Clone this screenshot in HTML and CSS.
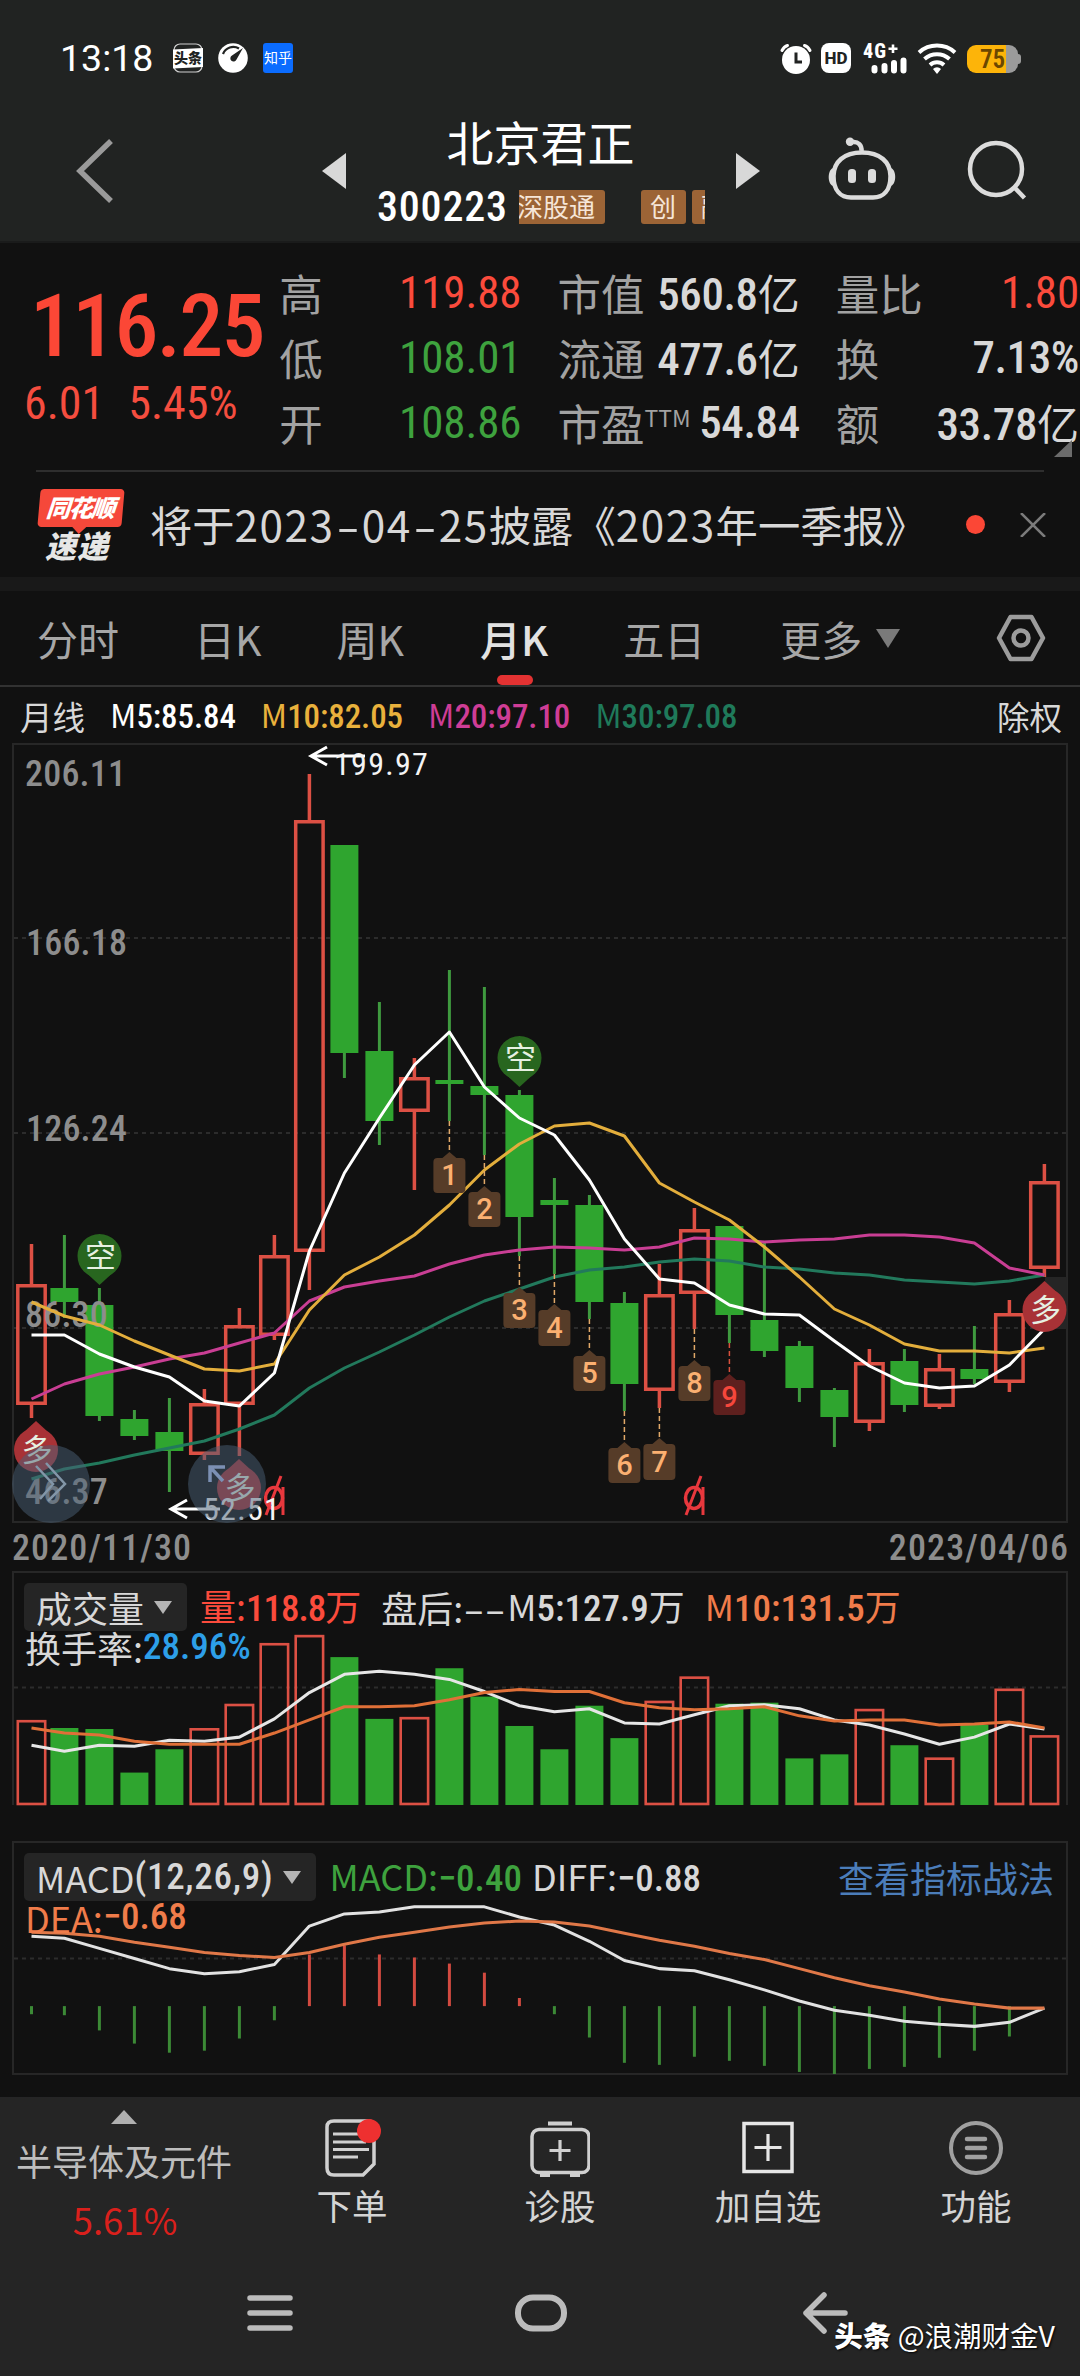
FILE: index.html
```html
<!DOCTYPE html>
<html lang="zh-CN">
<head>
    <meta charset="UTF-8">
    <meta name="viewport" content="width=device-width, initial-scale=1.0">
    <title>北京君正 300223</title>
    <link rel="stylesheet" href="styles.css">
</head>
<body>
    <header class="top">
        <div class="status-bar">
            <span class="clock">13:18</span>
            <div class="status-apps">
                <svg width="30" height="30" viewBox="0 0 30 30">
                    <rect x="1" y="1" width="28" height="28" rx="6" fill="none" stroke="#cfcfcf" stroke-width="1.2"/>
                    <path d="M0 6.500 L30 5 V24 L0 25.500Z" fill="#fff"/>
                    <text x="15" y="20" class="toutiao-text">头条</text>
                </svg>
                <svg width="30" height="30" viewBox="0 0 30 30">
                    <circle cx="15" cy="15" r="14.800" fill="#fff"/>
                    <path d="M5 11 A11 11 0 0 1 21 5.500" fill="none" stroke="#212322" stroke-width="2.200"/>
                    <path d="M25 5 L18.500 16.500 A3.200 3.200 0 1 1 14 12.500Z" fill="#212322"/>
                </svg>
                <span class="zhihu">知乎</span>
            </div>
            <div class="status-right">
                <svg width="34" height="31" viewBox="0 0 34 31">
                    <circle cx="17" cy="17" r="14" fill="#fff"/>
                    <path d="M3 7.500 Q5 3.500 8.500 2.500 M31 7.500 Q29 3.500 25.500 2.500" stroke="#fff" stroke-width="3" fill="none" stroke-linecap="round"/>
                    <path d="M17 9.500 V19 H23" fill="none" stroke="#212322" stroke-width="3"/>
                </svg>
                <span class="hd">HD</span>
                <svg class="net" width="46" height="31" viewBox="0 0 46 31">
                    <text x="0" y="15" class="net-text">4G</text>
                    <path d="M30 1.500 V10 M25.500 5.700 H34.500" stroke="#fff" stroke-width="2.600"/>
                    <path d="M11.500 25 V27.500 M21.500 23 V27.500 M31 20 V27.500 M40.500 17.500 V27.500" stroke="#fff" stroke-width="6" stroke-linecap="round"/>
                </svg>
                <svg class="wifi" width="40" height="31" viewBox="0 0 40 31">
                    <path d="M2 9.500 A27 27 0 0 1 38 9.500 M7.500 16 A18.500 18.500 0 0 1 32.500 16 M13 22 A10.500 10.500 0 0 1 27 22" fill="none" stroke="#fff" stroke-width="4"/>
                    <path d="M16 26 A5.500 5.500 0 0 1 24 26 L20 31Z" fill="#fff"/>
                </svg>
                <div class="battery"><span>75</span></div>
            </div>
        </div>
        <div class="title-bar">
            <svg class="back" width="38" height="64" viewBox="0 0 38 64">
                <path d="M35 2 L4 32 L35 62" fill="none" stroke="#9a9a9a" stroke-width="5.500"/>
            </svg>
            <svg class="prev" width="24" height="36" viewBox="0 0 24 36"><path d="M24 0 V36 L0 18Z" fill="#d8d8d8"/></svg>
            <div class="stock">
                <h1>北京君正</h1>
                <div class="code-row">
                    <span class="code num">300223</span>
                    <div class="tags">
                        <span class="tag tag-cut">深股通</span>
                        <span class="tag">创</span>
                        <span class="tag">融</span>
                    </div>
                </div>
            </div>
            <svg class="next" width="24" height="36" viewBox="0 0 24 36"><path d="M0 0 V36 L24 18Z" fill="#d8d8d8"/></svg>
            <svg class="robot" width="70" height="64" viewBox="0 0 70 64">
                <path d="M35 15.500 C53 15.500 63.500 25 63.500 39 C63.500 54 56 60.500 46 60.500 H24 C14 60.500 6.500 54 6.500 39 C6.500 25 17 15.500 35 15.500Z" fill="none" stroke="#dcdcdc" stroke-width="4.500"/>
                <path d="M34.500 14 C35 8 31 4.500 26 5" fill="none" stroke="#dcdcdc" stroke-width="4.500"/>
                <path d="M7 31 C0 31 0 49 7 49Z M63 31 C70 31 70 49 63 49Z" fill="#dcdcdc"/>
                <circle cx="23" cy="4.800" r="4.200" fill="#dcdcdc"/>
                <rect x="21" y="32" width="8" height="14" rx="3.500" fill="#dcdcdc"/>
                <rect x="41" y="32" width="8" height="14" rx="3.500" fill="#dcdcdc"/>
            </svg>
            <svg class="search" width="62" height="62" viewBox="0 0 62 62">
                <circle cx="29" cy="29" r="26" fill="none" stroke="#dcdcdc" stroke-width="4.500"/>
                <path d="M47.500 47.500 L57.500 58" stroke="#dcdcdc" stroke-width="4.500"/>
            </svg>
        </div>
    </header>

    <section class="quote">
        <div class="price-box">
            <div class="price num">116.25</div>
            <div class="change num"><span>6.01</span><span>5.45%</span></div>
        </div>
        <dl class="stats col-a">
            <div><dt>高</dt><dd class="num up">119.88</dd></div>
            <div><dt>低</dt><dd class="num down">108.01</dd></div>
            <div><dt>开</dt><dd class="num down">108.86</dd></div>
        </dl>
        <dl class="stats col-b">
            <div><dt>市值</dt><dd><span class="num">560.8</span>亿</dd></div>
            <div><dt>流通</dt><dd><span class="num">477.6</span>亿</dd></div>
            <div><dt>市盈<sup>TTM</sup></dt><dd class="num">54.84</dd></div>
        </dl>
        <dl class="stats col-c">
            <div><dt>量比</dt><dd class="num up">1.80</dd></div>
            <div><dt>换</dt><dd class="num">7.13%</dd></div>
            <div><dt>额</dt><dd><span class="num">33.78</span>亿</dd></div>
        </dl>
        <svg class="corner" width="18" height="17" viewBox="0 0 18 17"><path d="M18 0 V17 H0Z" fill="#6c6c6c"/></svg>
    </section>

    <section class="news">
        <div class="news-logo">
            <span class="logo-top">同花顺</span>
            <span class="logo-bottom">速递</span>
        </div>
        <p>将于<span class="date">2023<i>-</i>04<i>-</i>25</span>披露《<span class="date">2023</span>年一季报》</p>
        <span class="dot"></span>
        <svg width="26" height="24" viewBox="0 0 26 24"><path d="M1 0 L25 24 M25 0 L1 24" stroke="#7b7b7b" stroke-width="2.500"/></svg>
    </section>

    <nav class="tabs">
        <a>分时</a>
        <a>日K</a>
        <a>周K</a>
        <a class="active">月K</a>
        <a>五日</a>
        <a class="more">更多<svg width="24" height="19" viewBox="0 0 24 19"><path d="M0 0 H24 L12 19Z" fill="#7a7a7a"/></svg></a>
        <svg class="gear" width="50" height="50" viewBox="0 0 50 50">
            <path d="M14.500 4 H35.500 L47 25 L35.500 46 H14.500 L3 25Z" fill="none" stroke="#9c9c9c" stroke-width="4.500" stroke-linejoin="round"/>
            <circle cx="25" cy="25" r="7.500" fill="none" stroke="#9c9c9c" stroke-width="4.500"/>
        </svg>
    </nav>

    <div class="ma-row">
        <span class="period">月线</span>
        <span class="ma5">M<b>5:85.84</b></span>
        <span class="ma10">M<b>10:82.05</b></span>
        <span class="ma20">M<b>20:97.10</b></span>
        <span class="ma30">M<b>30:97.08</b></span>
        <span class="adjust">除权</span>
    </div>

    <svg id="kline" class="chart" width="1080" height="782" viewBox="0 742 1080 782"></svg>

    <div class="dates num"><span>2020/11/30</span><span>2023/04/06</span></div>

    <section class="panel volume">
        <svg id="volume" class="chart" width="1080" height="235" viewBox="0 1571 1080 232" preserveAspectRatio="none"></svg>
        <div class="panel-head">
            <div class="head-row">
                <span class="picker">成交量<i></i></span>
                <span class="up vol-now">量:<b>118.8</b>万</span>
                <span>盘后:<em>--</em></span>
                <span class="vol-m5">M<b>5:127.9</b>万</span>
                <span class="orange">M<b>10:131.5</b>万</span>
            </div>
            <div class="head-row second">换手率:<b class="blue">28.96%</b></div>
        </div>
    </section>

    <section class="panel macd">
        <svg id="macd" class="chart" width="1080" height="235" viewBox="0 1837 1080 232" preserveAspectRatio="none"></svg>
        <div class="panel-head">
            <div class="head-row">
                <span class="picker wide">MACD<b>(12,26,9)</b><i></i></span>
                <span class="down macd-value">MACD:<b>−0.40</b></span>
                <span>DIFF:<b>−0.88</b></span>
                <a class="guide">查看指标战法</a>
            </div>
            <div class="head-row second orange">DEA:<b>−0.68</b></div>
        </div>
    </section>

    <footer class="bottom">
        <div class="actions">
            <div class="sector">
                <svg width="26" height="14" viewBox="0 0 26 14"><path d="M13 0 L26 14 H0Z" fill="#b0b0b0"/></svg>
                <span class="sector-name">半导体及元件</span>
                <span class="sector-change">5.61%</span>
            </div>
            <div class="action">
                <svg width="60" height="60" viewBox="0 0 60 60">
                    <path d="M12 3 H46 Q52 3 52 9 V46 L41 57 H12 Q5 57 5 50 V9 Q5 3 12 3Z" fill="none" stroke="#d0d0d0" stroke-width="3.500"/>
                    <path d="M11 16 H40 M11 24 H44 M11 31.500 H47 M11 39 H36" stroke="#d0d0d0" stroke-width="3.200"/>
                    <circle cx="47" cy="13" r="12" fill="#ee3030"/>
                </svg>
                <span>下单</span>
            </div>
            <div class="action">
                <svg width="60" height="60" viewBox="0 0 60 60">
                    <path d="M18 5.500 H42" stroke="#d0d0d0" stroke-width="4"/>
                    <rect x="2" y="11.500" width="57" height="43" rx="7" fill="none" stroke="#d0d0d0" stroke-width="3.500"/>
                    <path d="M10 57 H20 M40 57 H50" stroke="#d0d0d0" stroke-width="4"/>
                    <path d="M30 22 V43 M19.500 32.500 H40.500" stroke="#d0d0d0" stroke-width="3.200"/>
                </svg>
                <span>诊股</span>
            </div>
            <div class="action">
                <svg width="60" height="60" viewBox="0 0 60 60">
                    <rect x="6" y="5.500" width="48" height="48" fill="none" stroke="#e6e6e6" stroke-width="3.500"/>
                    <path d="M30 16 V43 M16.500 29.500 H43.500" stroke="#e6e6e6" stroke-width="3.200"/>
                </svg>
                <span>加自选</span>
            </div>
            <div class="action">
                <svg width="60" height="60" viewBox="0 0 60 60">
                    <circle cx="30" cy="30" r="25" fill="none" stroke="#a0a0a0" stroke-width="4"/>
                    <path d="M21 21 H39 M21 30 H39 M21 39 H39" stroke="#a0a0a0" stroke-width="4.500" stroke-linecap="round"/>
                </svg>
                <span>功能</span>
            </div>
        </div>
        <div class="system-nav">
            <svg width="46" height="38" viewBox="0 0 46 38"><path d="M3 4 H43 M3 19 H43 M3 34 H43" stroke="#bcbcbc" stroke-width="5.500" stroke-linecap="round"/></svg>
            <svg width="54" height="38" viewBox="0 0 54 38"><rect x="4" y="3.500" width="46" height="31" rx="15" fill="none" stroke="#bcbcbc" stroke-width="6"/></svg>
            <svg width="46" height="42" viewBox="0 0 46 42"><path d="M22 3 L4 21 L22 39 M4 21 H43" fill="none" stroke="#bcbcbc" stroke-width="5.500" stroke-linecap="round" stroke-linejoin="round"/></svg>
        </div>
        <div class="watermark"><b>头条</b> @浪潮财金V</div>
    </footer>

    <script src="script.js"></script>
</body>
</html>
```
FILE: styles.css
```css
* {
    margin: 0;
    padding: 0;
    box-sizing: border-box;
}

body {
    width: 1080px;
    height: 2376px;
    overflow: hidden;
    background-color: #111111;
    color: #d8d8d8;
    font-family: "Noto Sans CJK SC", sans-serif;
    font-weight: 400;
}

svg {
    display: block;
    flex: none;
}

b,
.num {
    font-family: "Roboto Condensed", Roboto, sans-serif;
    font-weight: 500;
}

i,
em {
    font-style: normal;
}

.up {
    color: #fb4b3c;
}

.down {
    color: #3ea23e;
}

.orange {
    color: #f07c4a;
}

.blue {
    color: #2d9fe8;
}

/* status bar + title */
.top {
    height: 243px;
    background-color: #212322;
    border-bottom: 2px solid #1a1b1b;
}

.status-bar {
    display: flex;
    align-items: center;
    height: 116px;
    padding: 0 60px;
    color: #ffffff;
}

.clock {
    width: 113px;
    font-family: Roboto, sans-serif;
    font-size: 37.5px;
}

.status-apps {
    display: flex;
    gap: 15px;
}

.toutiao-text {
    font-size: 14px;
    font-weight: 900;
    text-anchor: middle;
    fill: #212322;
}

.zhihu {
    width: 30px;
    height: 30px;
    border-radius: 3px;
    background-color: #0b6cff;
    font-size: 14px;
    line-height: 28px;
    text-align: center;
}

.status-right {
    display: flex;
    align-items: center;
    margin-left: auto;
}

.hd {
    width: 30px;
    height: 30px;
    margin: 0 12px 0 8px;
    border-radius: 8px;
    background-color: #ffffff;
    color: #212322;
    font: 800 17px/31px Roboto, sans-serif;
    text-align: center;
}

.net-text {
    font: 800 20px "Roboto Condensed", Roboto, sans-serif;
    letter-spacing: 1px;
    fill: #ffffff;
}

.wifi {
    margin: 0 10px 0 8px;
}

.battery {
    position: relative;
    width: 51px;
    height: 28px;
    margin: 2px 2px 0 0;
    border-radius: 9px;
    background: linear-gradient(to right, #fdb409 39px, #9b9b9b 39px);
    color: #6b4700;
    font: 600 25px/29px "Roboto Condensed", Roboto, sans-serif;
    text-align: center;
}

.battery::after {
    content: "";
    position: absolute;
    right: -3px;
    top: 9px;
    width: 4px;
    height: 10px;
    border-radius: 0 3px 3px 0;
    background-color: #9b9b9b;
}

.title-bar {
    display: flex;
    height: 125px;
    padding-left: 76px;
}

.back {
    margin-top: 23px;
}

.prev {
    margin: 37px 0 0 208px;
}

.next {
    margin: 37px 0 0 29px;
}

.robot {
    margin: 21px 0 0 67px;
}

.search {
    margin: 24px 0 0 70px;
}

.stock {
    width: 330px;
    margin-left: 31px;
}

.stock h1 {
    margin: -4px 0 0 -3px;
    font-size: 47px;
    font-weight: 400;
    line-height: 58px;
    text-align: center;
    color: #ffffff;
}

.code-row {
    display: flex;
    align-items: center;
    height: 64px;
    margin-top: 5px;
}

.code {
    width: 142px;
    font-size: 42px;
    letter-spacing: 0.8px;
    line-height: 64px;
    color: #ffffff;
}

.tags {
    display: flex;
    width: 186px;
    overflow: hidden;
}

.tag {
    flex: none;
    height: 34px;
    margin-right: 6px;
    padding: 0 9.5px;
    border-radius: 3px;
    background-color: #9c6436;
    color: #f6e6d8;
    font-size: 26px;
    line-height: 32px;
}

.tag-cut {
    margin: 0 36px 0 -2px;
    padding-left: 0;
}

/* quote */
.quote {
    position: relative;
    display: flex;
    height: 227px;
    margin-right: 1px;
    padding-top: 17px;
}

.price-box {
    width: 280px;
}

.price {
    margin: 16px 0 0 30px;
    color: #fb4736;
    font-size: 88px;
    letter-spacing: -1.8px;
    line-height: 100px;
}

.change {
    display: flex;
    gap: 24px;
    margin: 2px 0 0 24px;
    color: #f54d3f;
    font-size: 46px;
    font-weight: 400;
    line-height: 50px;
}

.stats > div {
    display: flex;
    align-items: center;
    justify-content: space-between;
    height: 65px;
    line-height: 59px;
    white-space: nowrap;
}

.stats dt {
    color: #a2a2a2;
    font-size: 43.5px;
}

.stats dd {
    font-size: 42px;
}

.stats .num {
    font-size: 45px;
    letter-spacing: -0.4px;
}

.stats dd.up,
.stats dd.down {
    font-weight: 450;
    letter-spacing: -0.1px;
}

.stats sup {
    font-size: 23px;
    line-height: 1;
    vertical-align: 14px;
}

.col-a {
    width: 243px;
}

.col-b {
    width: 243px;
    margin-left: 36px;
}

.col-c {
    width: 244px;
    margin-left: 36px;
}

.corner {
    position: absolute;
    right: 7px;
    top: 197px;
}

/* news */
.news {
    display: flex;
    align-items: center;
    height: 107px;
    margin: 0 36px;
    border-top: 2px solid #2e2e2e;
}

.news-logo {
    flex: none;
    width: 90px;
    height: 76px;
    margin: 4px 24px 0 0;
    font-weight: 900;
    font-style: italic;
}

.logo-top {
    display: block;
    position: relative;
    width: 84px;
    height: 38px;
    margin-left: 3px;
    padding-right: 2px;
    border-radius: 4px;
    background-color: #f5483a;
    color: #ffffff;
    font-size: 24px;
    letter-spacing: -1.5px;
    line-height: 36px;
    text-align: center;
    transform: skewX(-5deg);
}

.logo-top::after {
    content: "";
    position: absolute;
    left: 35px;
    top: 38px;
    border: 7px solid transparent;
    border-top-color: #f5483a;
}

.logo-bottom {
    display: block;
    margin: -3px 0 0 9px;
    font-size: 31px;
    letter-spacing: 1px;
    line-height: 41px;
    color: #e6e6e6;
}

.news p {
    flex: none;
    width: 816px;
    margin-top: -2px;
    font-size: 42.3px;
    line-height: 80px;
    white-space: nowrap;
}

.news .date {
    letter-spacing: 1.5px;
}

.news .date i {
    display: inline-block;
    margin: 0 5px 0 6px;
    transform: scaleX(1.6);
}

.dot {
    flex: none;
    width: 19px;
    height: 19px;
    margin-right: 35px;
    border-radius: 50%;
    background-color: #fb4736;
}

/* tabs */
.tabs {
    display: flex;
    align-items: center;
    height: 110px;
    padding-left: 37px;
    border-top: 14px solid #191919;
    border-bottom: 2px solid #323232;
    color: #a6a6a6;
    font-size: 41px;
    line-height: 70px;
}

.tabs a {
    position: relative;
    margin-right: 75px;
}

.tabs .active {
    margin-left: 1px;
    color: #e2e2e2;
    font-weight: 500;
}

.tabs .active::after {
    content: "";
    position: absolute;
    left: 17px;
    bottom: -12px;
    width: 36px;
    height: 10px;
    border-radius: 5px;
    background-color: #e33232;
}

.tabs .more {
    display: flex;
    align-items: center;
    gap: 14px;
    margin-right: 0;
}

.gear {
    margin: 0 34px 0 auto;
}

/* moving averages */
.ma-row {
    display: flex;
    align-items: center;
    height: 55px;
    padding: 1px 18px 0 20px;
    font-size: 32.5px;
    line-height: 55px;
    white-space: nowrap;
}

.ma-row span {
    margin-right: 25px;
}

.ma-row b {
    font-size: 33px;
    letter-spacing: -0.1px;
}

.ma-row .adjust {
    margin: 0 0 0 auto;
}

.ma5 {
    color: #ffffff;
}

.ma10 {
    color: #e9b13c;
}

.ma20 {
    color: #cf3d96;
}

.ma30 {
    color: #1f7a5a;
}

/* charts */
.frame {
    fill: none;
    stroke: #272727;
    stroke-width: 2;
}

.grid-line {
    stroke: #2c2c2c;
    stroke-width: 2;
    stroke-dasharray: 4 4;
}

.candle-up {
    fill: none;
    stroke: #dc5044;
    stroke-width: 3.5;
}

.candle-down {
    fill: #2fa52f;
}

.wick-down {
    stroke: #3f9a3f;
    stroke-width: 3;
}

.line {
    fill: none;
    stroke-width: 3;
    stroke-linejoin: round;
}

.axis-text {
    font: 500 36px "Roboto Condensed", Roboto, sans-serif;
    letter-spacing: 0.2px;
    fill: #8d8d8d;
}

.mark-text {
    font: 450 32px "Roboto Condensed", Roboto, sans-serif;
    letter-spacing: 1.3px;
    fill: #f4f4f4;
}

.seq-text {
    font: 500 29px Roboto, sans-serif;
    text-anchor: middle;
    fill: #fbb071;
}

.pin-text {
    font: 400 31px "Noto Sans CJK SC", sans-serif;
    text-anchor: middle;
    fill: #e6f0e2;
}

.dates {
    display: flex;
    justify-content: space-between;
    height: 47px;
    padding: 0 11px 0 12px;
    color: #8d8d8d;
    font-size: 36px;
    letter-spacing: 1.1px;
    line-height: 48px;
}

/* volume + macd */
.panel {
    display: grid;
    height: 235px;
}

.panel > * {
    grid-area: 1 / 1;
}

.volume {
    margin-bottom: 35px;
}

.panel-head {
    z-index: 1;
    padding: 12px 26px 0 24px;
    font-size: 36px;
}

.panel-head b {
    font-size: 37px;
}

.head-row {
    display: flex;
    align-items: center;
    height: 48px;
    line-height: 44px;
    white-space: nowrap;
}

.head-row.second {
    height: 32px;
    padding-left: 1px;
    line-height: 28px;
}

.picker {
    display: flex;
    align-items: center;
    height: 48px;
    margin-right: 13px;
    padding: 0 15px 0 12px;
    border-radius: 5px;
    background-color: #252525;
}

.picker.wide b {
    letter-spacing: 0.7px;
}

.picker i {
    margin-left: 10px;
    border: 9px solid transparent;
    border-top: 13px solid #b4b4b4;
    border-bottom: 0;
}

.vol-now {
    margin-right: 20px;
}

.vol-now b {
    letter-spacing: -1px;
}

.head-row em {
    display: inline-block;
    margin: 0 10px 0 9px;
    transform: scaleX(1.7);
}

.vol-m5 {
    margin-right: 20px;
}

.macd-value {
    margin-right: 10px;
}

.guide {
    margin-left: auto;
    color: #4b7dba;
}

/* bottom */
.bottom {
    position: relative;
    height: 279px;
    margin-top: 21px;
    background-color: #252525;
}

.actions {
    display: flex;
    height: 143px;
}

.sector {
    display: flex;
    flex-direction: column;
    align-items: center;
    width: 248px;
    padding-top: 13px;
}

.sector-name {
    margin-top: 10px;
    color: #bdbdbd;
    font-size: 36px;
    line-height: 52px;
}

.sector-change {
    margin: 12px 0 0 2px;
    color: #da201c;
    font-size: 36.5px;
    line-height: 44px;
}

.action {
    display: flex;
    flex-direction: column;
    align-items: center;
    width: 208px;
    padding-top: 21px;
    color: #d4d4d4;
    font-size: 35.5px;
    line-height: 54px;
}

.system-nav {
    display: flex;
    align-items: center;
    gap: 221px;
    height: 146px;
    padding-left: 247px;
}

.system-nav svg:last-child {
    margin-left: 13px;
}

.watermark {
    position: absolute;
    right: 25px;
    bottom: 19px;
    color: #ffffff;
    font-size: 28.5px;
    line-height: 44px;
    text-shadow: 1px 1px 2px #000000;
}

.watermark b {
    font-family: "Noto Sans CJK SC", sans-serif;
    font-weight: 900;
}
```
FILE: script.js
```js
const NS = 'http://www.w3.org/2000/svg';

// [up, high, body top, body bottom, low]
const candles = [
    [1, 1244, 1284, 1405, 1418], [0, 1235, 1288, 1302, 1318], [0, 1288, 1305, 1416, 1421],
    [0, 1410, 1419, 1436, 1440], [0, 1398, 1432, 1451, 1492], [1, 1389, 1403, 1455, 1460],
    [1, 1308, 1325, 1405, 1456], [1, 1235, 1255, 1336, 1340], [1, 774, 820, 1252, 1290],
    [0, 845, 845, 1053, 1078], [0, 1002, 1051, 1121, 1145], [1, 1058, 1077, 1112, 1190],
    [0, 970, 1080, 1084, 1121], [0, 987, 1086, 1095, 1155], [0, 1090, 1095, 1217, 1256],
    [0, 1178, 1200, 1205, 1274], [0, 1195, 1205, 1302, 1319], [0, 1292, 1303, 1384, 1411],
    [1, 1264, 1294, 1391, 1408], [1, 1208, 1229, 1294, 1329], [0, 1226, 1226, 1315, 1343],
    [0, 1243, 1320, 1351, 1357], [0, 1341, 1346, 1388, 1402], [0, 1388, 1390, 1417, 1447],
    [1, 1349, 1362, 1423, 1431], [0, 1349, 1361, 1405, 1412], [1, 1354, 1368, 1407, 1409],
    [0, 1326, 1369, 1379, 1384], [1, 1300, 1313, 1383, 1392], [1, 1164, 1181, 1269, 1277]
];

const ma5 = [1335, 1335, 1354, 1367, 1377, 1401, 1406, 1373, 1251, 1173, 1118, 1065, 1032, 1087, 1118, 1135, 1180, 1239, 1279, 1283, 1305, 1314, 1315, 1341, 1366, 1383, 1388, 1386, 1365, 1329];
const ma10 = [1302, 1316, 1325, 1341, 1355, 1369, 1371, 1364, 1310, 1275, 1257, 1235, 1205, 1170, 1144, 1126, 1123, 1136, 1183, 1202, 1220, 1247, 1277, 1309, 1325, 1344, 1351, 1351, 1353, 1348];
const ma20 = [1399, 1384, 1374, 1367, 1359, 1353, 1343, 1333, 1301, 1287, 1281, 1276, 1264, 1255, 1250, 1247, 1248, 1250, 1247, 1238, 1239, 1242, 1240, 1239, 1235, 1235, 1237, 1243, 1268, 1275];
const ma30 = [1479, 1469, 1463, 1455, 1448, 1441, 1429, 1415, 1388, 1368, 1352, 1335, 1317, 1301, 1289, 1277, 1270, 1267, 1262, 1259, 1261, 1267, 1269, 1273, 1275, 1280, 1282, 1284, 1281, 1275];

const volumes = [1718, 1726, 1727, 1770, 1747, 1726, 1702, 1642, 1634, 1656, 1717, 1715, 1667, 1695, 1724, 1747, 1704, 1736, 1699, 1675, 1702, 1701, 1756, 1752, 1707, 1743, 1755, 1723, 1687, 1733];
const vol5 = [1743, 1749, 1743, 1744, 1738, 1739, 1735, 1717, 1691, 1673, 1670, 1673, 1678, 1690, 1704, 1710, 1707, 1721, 1722, 1713, 1704, 1703, 1707, 1718, 1723, 1732, 1742, 1735, 1722, 1727];
const vol10 = [1726, 1731, 1733, 1739, 1742, 1742, 1742, 1731, 1718, 1705, 1705, 1704, 1698, 1691, 1688, 1690, 1690, 1701, 1706, 1708, 1707, 1705, 1714, 1719, 1718, 1718, 1723, 1722, 1720, 1726];

const macdBars = [2008, 2009, 2024, 2037, 2046, 2044, 2032, 2014, 1949, 1940, 1949, 1952, 1958, 1967, 1992, 2008, 2031, 2056, 2058, 2050, 2054, 2059, 2065, 2067, 2062, 2060, 2051, 2044, 2030];
const diff = [1931, 1933, 1943, 1953, 1963, 1968, 1966, 1959, 1921, 1909, 1907, 1902, 1902, 1902, 1912, 1920, 1936, 1955, 1963, 1965, 1974, 1984, 1995, 2004, 2009, 2015, 2018, 2020, 2016, 2002];
const dea = [1927, 1928, 1931, 1937, 1942, 1947, 1950, 1952, 1947, 1939, 1932, 1927, 1922, 1918, 1916, 1917, 1921, 1928, 1935, 1941, 1948, 1954, 1963, 1972, 1980, 1986, 1993, 1998, 2002, 2002];

// candle index, tip y, bottom y
const sequence = [[12, 1152, 1193], [13, 1186, 1227], [14, 1287, 1328], [15, 1304, 1346], [16, 1350, 1391], [17, 1442, 1483], [18, 1438, 1480], [19, 1360, 1401], [20, 1374, 1415]];

function x(i) {
    return i === 0 ? 31.5 : 64.4 + 35 * (i - 1);
}

function add(parent, name, attrs, text) {
    const el = document.createElementNS(NS, name);
    for (const key in attrs) el.setAttribute(key, attrs[key]);
    if (text) el.textContent = text;
    parent.appendChild(el);
    return el;
}

function line(svg, values, color) {
    const points = values.map((y, i) => x(i) + ',' + y).join(' ');
    add(svg, 'polyline', { points: points, class: 'line', stroke: color });
}

function grid(svg, y) {
    add(svg, 'path', { d: 'M14 ' + y + 'H1066', class: 'grid-line' });
}

function pin(svg, cx, cy, label, color, up) {
    const s = up ? -1 : 1;
    add(svg, 'circle', { cx: cx, cy: cy, r: 22, fill: color });
    add(svg, 'path', { d: `M${cx - 12} ${cy + s * 18} L${cx} ${cy + s * 29} L${cx + 12} ${cy + s * 18}Z`, fill: color });
    add(svg, 'text', { x: cx + 1, y: cy + 11, class: 'pin-text' }, label);
}

function dividend(svg, cx) {
    add(svg, 'path', {
        d: `M${cx + 8} 1487 V1515 M${cx - 9} 1515 L${cx + 6} 1476`,
        stroke: '#e8383d', 'stroke-width': 3
    });
    add(svg, 'ellipse', { cx: cx - 1, cy: 1498, rx: 8.5, ry: 10.5, fill: 'none', stroke: '#e8383d', 'stroke-width': 3.5 });
}

function drawKline() {
    const svg = document.getElementById('kline');
    add(svg, 'rect', { x: 13, y: 744, width: 1054, height: 778, class: 'frame' });
    [938, 1133, 1328].forEach(y => grid(svg, y));
    add(svg, 'rect', { x: 1045, y: 1277, width: 22, height: 52, fill: '#252525' });

    candles.forEach(([up, high, top, bottom, low], i) => {
        const cx = x(i);
        if (up) {
            add(svg, 'path', { d: `M${cx} ${high}V${top + 2} M${cx} ${bottom - 2}V${low} M${cx - 13.7} ${top + 1.7}h27.400V${bottom - 1.7}h-27.400Z`, class: 'candle-up' });
        } else {
            add(svg, 'path', { d: `M${cx} ${high}V${low}`, class: 'wick-down' });
            add(svg, 'rect', { x: cx - 14, y: top, width: 28, height: bottom - top, class: 'candle-down' });
        }
    });

    [['206.11', 25, 786], ['166.18', 26, 955], ['126.24', 26, 1141], ['86.30', 25, 1327], ['46.37', 25, 1504]]
        .forEach(([t, tx, ty]) => add(svg, 'text', { x: tx, y: ty, class: 'axis-text' }, t));

    line(svg, ma30, '#22795c');
    line(svg, ma20, '#c93e94');
    line(svg, ma10, '#e3ae3c');
    line(svg, ma5, '#ffffff');

    sequence.forEach(([i, tip, bottom], n) => {
        const cx = x(i);
        const last = n === 8;
        add(svg, 'path', { d: `M${cx} ${candles[i][4]}V${tip}`, stroke: last ? '#d8503c' : '#e0a868', 'stroke-width': 1.5, 'stroke-dasharray': '5 3' });
        add(svg, 'path', {
            d: `M${cx - 16} ${tip + 10} q0 -4 4 -4 h5 L${cx} ${tip} L${cx + 7} ${tip + 6} h5 q4 0 4 4 V${bottom - 4} q0 4 -4 4 h-24 q-4 0 -4 -4Z`,
            fill: last ? '#5e201e' : '#563c28'
        });
        const num = add(svg, 'text', { x: cx, y: bottom - 8, class: 'seq-text' }, String(n + 1));
        if (last) num.style.fill = '#f5473c';
    });

    pin(svg, 99.5, 1256, '空', '#28661f', false);
    pin(svg, 519.5, 1058, '空', '#28661f', false);
    pin(svg, 36, 1450, '多', '#a83236', true);
    pin(svg, 239, 1488, '多', '#a83236', true);
    pin(svg, 1044.5, 1310, '多', '#a83236', true);

    // peak and trough markers
    add(svg, 'path', { d: 'M365 756H311 M327 747L311 756L327 765', fill: 'none', stroke: '#fff', 'stroke-width': 3 });
    add(svg, 'text', { x: 334, y: 775, class: 'mark-text' }, '199.97');
    dividend(svg, 275);
    dividend(svg, 695);
    add(svg, 'path', { d: 'M220 1509H171 M187 1500L171 1509L187 1518', fill: 'none', stroke: '#fff', 'stroke-width': 3 });
    add(svg, 'text', { x: 203, y: 1520, class: 'mark-text' }, '52.51');

    // floating buttons
    add(svg, 'circle', { cx: 51, cy: 1484, r: 39, fill: '#4a6076', opacity: 0.5 });
    add(svg, 'circle', { cx: 227, cy: 1484, r: 39, fill: '#4a6076', opacity: 0.5 });
    add(svg, 'path', { d: 'M36 1466L53 1484L40 1499 M46 1463L65 1484L48 1501', fill: 'none', stroke: '#8296a8', 'stroke-width': 2.5 });
    add(svg, 'path', { d: 'M210 1482V1467H225 M210 1467L223 1481', fill: 'none', stroke: '#7c90b4', 'stroke-width': 3.5 });
}

function drawVolume() {
    const svg = document.getElementById('volume');
    add(svg, 'path', { d: 'M13 1802V1572H1067V1802', class: 'frame' });
    grid(svg, 1686);
    volumes.forEach((top, i) => {
        if (candles[i][0]) {
            add(svg, 'rect', { x: x(i) - 13.7, y: top + 1.3, width: 27.4, height: 1801 - top - 1.3, class: 'candle-up', style: 'stroke-width: 2.6' });
        } else {
            add(svg, 'rect', { x: x(i) - 14, y: top, width: 28, height: 1802 - top, class: 'candle-down' });
        }
    });
    line(svg, vol5, '#e6e6e6');
    line(svg, vol10, '#e07038');
}

function drawMacd() {
    const svg = document.getElementById('macd');
    add(svg, 'rect', { x: 13, y: 1838, width: 1054, height: 229, class: 'frame' });
    grid(svg, 1953);
    macdBars.forEach((y, i) => {
        add(svg, 'path', { d: `M${x(i)} 2000V${y}`, stroke: y < 2000 ? '#d24a40' : '#3c8a36', 'stroke-width': 3 });
    });
    line(svg, diff, '#e2e2e2');
    line(svg, dea, '#e07848');
}

drawKline();
drawVolume();
drawMacd();
```
